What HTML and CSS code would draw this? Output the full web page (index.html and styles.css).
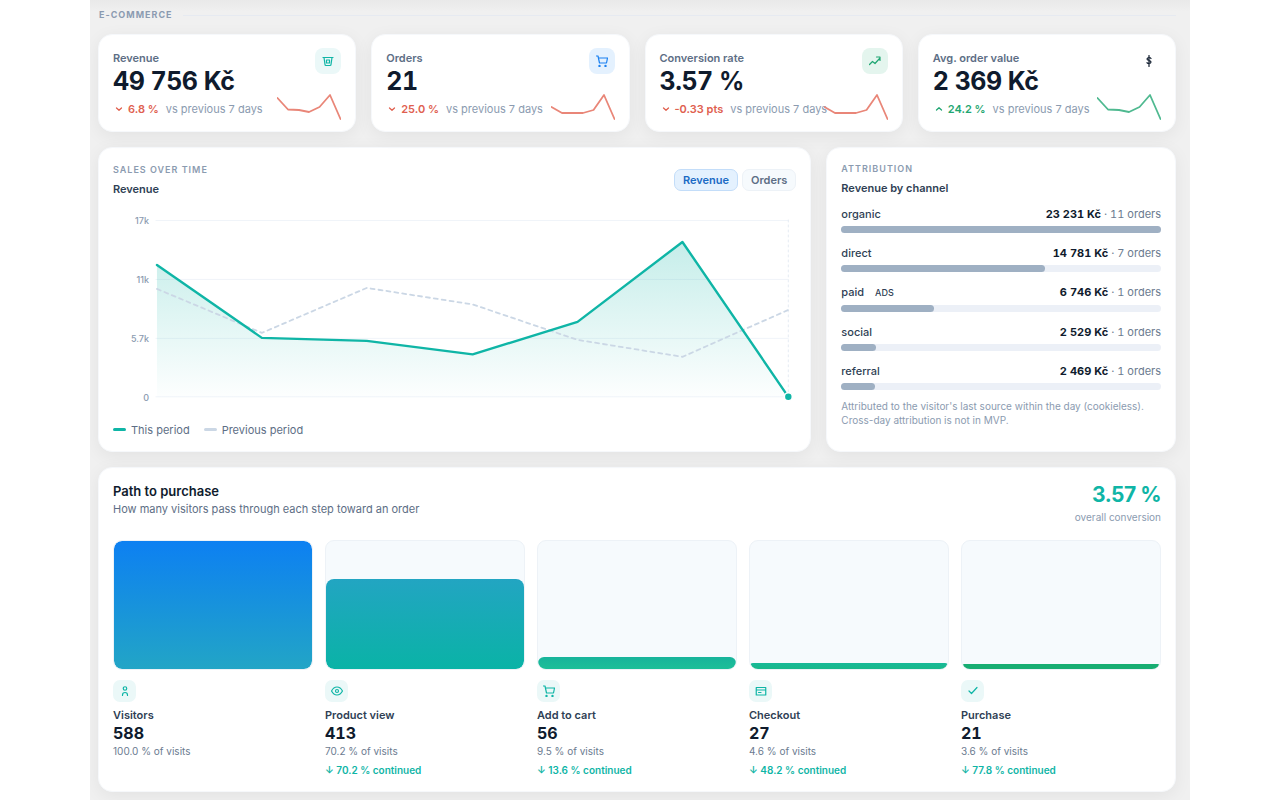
FILE: index.html
```html
<!DOCTYPE html>
<html lang="en">
<head>
    <meta charset="UTF-8">
    <meta name="viewport" content="width=device-width, initial-scale=1.0">
    <title>E-commerce overview</title>
    <link rel="stylesheet" href="styles.css">
</head>
<body>

<main class="dashboard">

    <h2 class="section-title">E-commerce</h2>

    <!-- KPI cards -->
    <section class="kpis">
        <article class="card kpi">
            <div class="kpi-text">
                <h3 class="kpi-label">Revenue</h3>
                <div class="kpi-value">49 756 Kč</div>
                <div class="kpi-delta down">
                    <svg class="caret" viewBox="0 0 12 12"><path d="M3.5 5 6 7.3 8.5 5"/></svg>
                    <strong>6.8 %</strong>
                    <span>vs previous 7 days</span>
                </div>
            </div>
            <span class="icon-box teal">
                <svg viewBox="0 0 24 24"><path d="M2 5h20M4 5l2 14q0 2 2 2h8q2 0 2-2l2-14M9 10v6M15 10v6M9 10h6M9 16h6"/></svg>
            </span>
            <svg class="spark down" viewBox="0 0 64 26"><path d="M0.5 4 11 15.5 22 16 32 18 42.5 13 53 1 63.5 25"/></svg>
        </article>

        <article class="card kpi">
            <div class="kpi-text">
                <h3 class="kpi-label">Orders</h3>
                <div class="kpi-value">21</div>
                <div class="kpi-delta down">
                    <svg class="caret" viewBox="0 0 12 12"><path d="M3.5 5 6 7.3 8.5 5"/></svg>
                    <strong>25.0 %</strong>
                    <span>vs previous 7 days</span>
                </div>
            </div>
            <span class="icon-box blue">
                <svg viewBox="0 0 24 24"><path d="M0 2h4l3 14h14l2-10H5"/><circle class="dot" cx="7" cy="22" r="1.2"/><circle class="dot" cx="19" cy="22" r="1.2"/></svg>
            </span>
            <svg class="spark down" viewBox="0 0 64 26"><path d="M0.5 13 11 19 32 19 42.5 16 53 1 63.5 25"/></svg>
        </article>

        <article class="card kpi">
            <div class="kpi-text">
                <h3 class="kpi-label">Conversion rate</h3>
                <div class="kpi-value">3.57 %</div>
                <div class="kpi-delta down">
                    <svg class="caret" viewBox="0 0 12 12"><path d="M3.5 5 6 7.3 8.5 5"/></svg>
                    <strong>-0.33 pts</strong>
                    <span>vs previous 7 days</span>
                </div>
            </div>
            <span class="icon-box green">
                <svg viewBox="0 0 24 24"><path d="M1 19l6-6 5 4 10-11M15 4h7v7"/></svg>
            </span>
            <svg class="spark down" viewBox="0 0 64 26"><path d="M0.5 13 11 19 32 19 42.5 16 53 1 63.5 25"/></svg>
        </article>

        <article class="card kpi">
            <div class="kpi-text">
                <h3 class="kpi-label">Avg. order value</h3>
                <div class="kpi-value">2 369 Kč</div>
                <div class="kpi-delta up">
                    <svg class="caret" viewBox="0 0 12 12"><path d="M3.5 7 6 4.7 8.5 7"/></svg>
                    <strong>24.2 %</strong>
                    <span>vs previous 7 days</span>
                </div>
            </div>
            <span class="icon-box">
                <svg viewBox="0 0 24 24"><path d="M14 1v22M18 7q-1-2-4-2t-4 3q0 2 4 3t4 3q0 3-4 3t-4-2"/></svg>
            </span>
            <svg class="spark up" viewBox="0 0 64 26"><path d="M0.5 4 11 15.5 22 16 32 18 42.5 13 53 1 63.5 25"/></svg>
        </article>
    </section>

    <section class="charts">
        <!-- Sales over time -->
        <article class="card sales">
            <header class="card-head">
                <div>
                    <p class="eyebrow">Sales over time</p>
                    <h3 class="card-title">Revenue</h3>
                </div>
                <div class="tabs">
                    <button type="button" class="tab active">Revenue</button>
                    <button type="button" class="tab">Orders</button>
                </div>
            </header>

            <svg class="sales-chart" viewBox="0 0 684 200">
                <defs>
                    <linearGradient id="area" x1="0" y1="0" x2="0" y2="1">
                        <stop offset="0" stop-color="#0fb5a6" stop-opacity="0.24"/>
                        <stop offset="1" stop-color="#0fb5a6" stop-opacity="0.01"/>
                    </linearGradient>
                </defs>
                <path class="grid-line" d="M43 10.5H676M43 69.5H676M43 128.5H676M43 187H676"/>
                <path class="cursor-line" d="M676 10V187"/>
                <text x="36" y="14">17k</text>
                <text x="36" y="73">11k</text>
                <text x="36" y="132">5.7k</text>
                <text x="36" y="191">0</text>
                <path fill="url(#area)" d="M44 55 149 128 254 131 360 144.5 465 112 570 32 676 187H44Z"/>
                <path class="line-previous" d="M44 79 149 123 254 78 360 94.5 465 130 570 147 676 100"/>
                <path class="line-current" d="M44 55 149 128 254 131 360 144.5 465 112 570 32 676 187"/>
                <circle class="end-point" cx="676" cy="187" r="4"/>
            </svg>

            <div class="legend">
                <span class="legend-item current">This period</span>
                <span class="legend-item previous">Previous period</span>
            </div>
        </article>

        <!-- Attribution -->
        <article class="card attribution">
            <p class="eyebrow">Attribution</p>
            <h3 class="card-title">Revenue by channel</h3>
            <ul class="channels">
                <li>
                    <div class="channel-row"><span>organic</span><span class="channel-value"><b>23 231 Kč</b> · 11 orders</span></div>
                    <div class="track"><div class="track-fill" style="width: 100%"></div></div>
                </li>
                <li>
                    <div class="channel-row"><span>direct</span><span class="channel-value"><b>14 781 Kč</b> · 7 orders</span></div>
                    <div class="track"><div class="track-fill" style="width: 63.6%"></div></div>
                </li>
                <li>
                    <div class="channel-row"><span>paid <small class="tag">ADS</small></span><span class="channel-value"><b>6 746 Kč</b> · 1 orders</span></div>
                    <div class="track"><div class="track-fill" style="width: 29%"></div></div>
                </li>
                <li>
                    <div class="channel-row"><span>social</span><span class="channel-value"><b>2 529 Kč</b> · 1 orders</span></div>
                    <div class="track"><div class="track-fill" style="width: 10.9%"></div></div>
                </li>
                <li>
                    <div class="channel-row"><span>referral</span><span class="channel-value"><b>2 469 Kč</b> · 1 orders</span></div>
                    <div class="track"><div class="track-fill" style="width: 10.6%"></div></div>
                </li>
            </ul>
            <p class="note">Attributed to the visitor's last source within the day (cookieless). Cross-day attribution is not in MVP.</p>
        </article>
    </section>

    <!-- Funnel -->
    <section class="card funnel">
        <header class="card-head">
            <div>
                <h3 class="funnel-title">Path to purchase</h3>
                <p class="funnel-sub">How many visitors pass through each step toward an order</p>
            </div>
            <div class="overall">
                <div class="overall-value">3.57 %</div>
                <div class="overall-label">overall conversion</div>
            </div>
        </header>

        <div class="steps">
            <div class="step">
                <div class="step-bar"><div class="step-fill visitors" style="height: 100%"></div></div>
                <span class="step-icon">
                    <svg viewBox="0 0 24 24"><circle cx="12" cy="7" r="3.5"/><path d="M7 21v-1q0-5 5-5t5 5v1"/></svg>
                </span>
                <h4 class="step-name">Visitors</h4>
                <div class="step-count">588</div>
                <div class="step-share">100.0 % of visits</div>
            </div>
            <div class="step">
                <div class="step-bar"><div class="step-fill views" style="height: 70.2%"></div></div>
                <span class="step-icon">
                    <svg viewBox="0 0 24 24"><path d="M1 12q4-8 11-8t11 8q-4 8-11 8T1 12z"/><circle cx="12" cy="12" r="3"/></svg>
                </span>
                <h4 class="step-name">Product view</h4>
                <div class="step-count">413</div>
                <div class="step-share">70.2 % of visits</div>
                <div class="step-next">↓ 70.2 % continued</div>
            </div>
            <div class="step">
                <div class="step-bar"><div class="step-fill cart" style="height: 9.5%"></div></div>
                <span class="step-icon">
                    <svg viewBox="0 0 24 24"><path d="M0 2h4l3 14h14l2-10H5"/><circle class="dot" cx="7" cy="22" r="1.2"/><circle class="dot" cx="19" cy="22" r="1.2"/></svg>
                </span>
                <h4 class="step-name">Add to cart</h4>
                <div class="step-count">56</div>
                <div class="step-share">9.5 % of visits</div>
                <div class="step-next">↓ 13.6 % continued</div>
            </div>
            <div class="step">
                <div class="step-bar"><div class="step-fill checkout" style="height: 4.6%"></div></div>
                <span class="step-icon">
                    <svg viewBox="0 0 24 24"><path d="M2.5 5h19v15h-19zM2.500 10h19M7 15h5"/></svg>
                </span>
                <h4 class="step-name">Checkout</h4>
                <div class="step-count">27</div>
                <div class="step-share">4.6 % of visits</div>
                <div class="step-next">↓ 48.2 % continued</div>
            </div>
            <div class="step">
                <div class="step-bar"><div class="step-fill purchase" style="height: 3.6%"></div></div>
                <span class="step-icon">
                    <svg viewBox="0 0 24 24"><path d="M4 12l5 5L20 5"/></svg>
                </span>
                <h4 class="step-name">Purchase</h4>
                <div class="step-count">21</div>
                <div class="step-share">3.6 % of visits</div>
                <div class="step-next">↓ 77.8 % continued</div>
            </div>
        </div>
    </section>

</main>

</body>
</html>
```
FILE: styles.css
```css
* {
    box-sizing: border-box;
}

body {
    margin: 0;
    background: #fff;
    color: #0f1b2d;
    font-family: Inter, "Liberation Sans", sans-serif;
    font-size: 11px;
}

h2, h3, h4, p, ul {
    margin: 0;
    padding: 0;
    font-weight: 600;
}

svg {
    display: block;
    fill: none;
    stroke: currentColor;
    stroke-width: 2;
    stroke-linecap: round;
    stroke-linejoin: round;
}

.dot {
    fill: currentColor;
}

.dashboard {
    max-width: 1100px;
    margin: 0 auto;
    padding: 9px 14px 8px 8px;
    background: linear-gradient(#e9e9e9, #f0f0f0 12px);
    overflow: hidden;
}

.section-title {
    display: flex;
    align-items: center;
    gap: 10px;
    margin: 0 0 13px 1px;
    font-size: 9px;
    font-weight: 700;
    line-height: 12px;
    letter-spacing: 1px;
    text-transform: uppercase;
    color: #8b9bb0;
}

.section-title::after {
    content: "";
    flex: 1;
    height: 1px;
    background: #e6eaf1;
}

.card {
    background: #fff;
    border: 1px solid #f6f8fb;
    border-radius: 14px;
    box-shadow: 0 4px 18px rgba(0, 0, 0, 0.06);
}

/* KPI cards */
.kpis {
    display: grid;
    grid-template-columns: repeat(4, minmax(0, 1fr));
    gap: 15px;
    margin-bottom: 15px;
}

.kpi {
    position: relative;
    display: flex;
    justify-content: space-between;
    align-items: flex-start;
    padding: 13px 14px 15px;
}

.kpi-text {
    min-width: 0;
    padding-top: 3px;
    white-space: nowrap;
}

.kpi-label {
    font-size: 11px;
    font-weight: 600;
    line-height: 14px;
    color: #5d6e85;
}

.kpi-value {
    margin: 2px 0 7px;
    font-size: 25px;
    font-weight: 700;
    line-height: 28px;
    letter-spacing: -0.5px;
    font-variant-numeric: tabular-nums;
}

.kpi-delta {
    display: flex;
    align-items: center;
    line-height: 14px;
    color: #8b9bb0;
}

.kpi-delta strong {
    margin: 0 7px 0 3px;
    font-weight: 600;
}

.kpi-delta.down strong,
.kpi-delta.down .caret {
    color: #e0604f;
}

.kpi-delta.up strong,
.kpi-delta.up .caret {
    color: #1fa672;
}

.caret {
    width: 12px;
    height: 12px;
    stroke-width: 1.3;
}

.icon-box {
    flex: none;
    display: grid;
    place-items: center;
    width: 26px;
    height: 26px;
    border-radius: 8px;
}

.icon-box svg {
    width: 12px;
    height: 12px;
    stroke-width: 2.4;
}

.icon-box.teal {
    background: #ebf8f8;
    color: #0fb5a6;
}

.icon-box.blue {
    background: #e4f1fe;
    color: #1a80f0;
}

.icon-box.green {
    background: #e4f5ee;
    color: #1fa672;
}

.spark {
    position: absolute;
    right: 14px;
    bottom: 11px;
    width: 64px;
    height: 26px;
    stroke-width: 1.8;
}

.spark.down {
    color: #e98678;
}

.spark.up {
    color: #4fb990;
}

/* Charts row */
.charts {
    display: grid;
    grid-template-columns: minmax(0, 714fr) minmax(0, 350fr);
    gap: 15px;
    margin-bottom: 15px;
}

.sales,
.attribution {
    padding: 15px 14px 13px;
}

.sales {
    padding-top: 16px;
}

.card-head {
    display: flex;
    justify-content: space-between;
    align-items: flex-start;
}

.eyebrow {
    font-size: 9px;
    line-height: 12px;
    letter-spacing: 1px;
    text-transform: uppercase;
    color: #8b9bb0;
}

.card-title {
    margin-top: 5px;
    font-size: 11px;
    line-height: 16px;
    color: #2f3f55;
}

.tabs {
    display: flex;
    gap: 4px;
    padding-top: 5px;
}

.tab {
    height: 22px;
    padding: 0 8px;
    border: 1px solid #edf2f7;
    border-radius: 7px;
    background: #f6fafd;
    color: #5d6e85;
    font: 600 11px Inter, "Liberation Sans", sans-serif;
    cursor: pointer;
}

.tab.active {
    border-color: #c3ddf9;
    background: #e4f1fe;
    color: #1b6ac4;
}

.sales-chart {
    width: 100%;
    margin-top: 13px;
}

.sales-chart text {
    fill: #8b9bb0;
    stroke: none;
    font-size: 9px;
    font-weight: 500;
    text-anchor: end;
}

.sales-chart path[fill] {
    stroke: none;
}

.grid-line {
    stroke: #f0f4f9;
    stroke-width: 1;
}

.cursor-line {
    stroke: #e6ebf3;
    stroke-width: 1;
    stroke-dasharray: 2 3;
}

.line-current {
    stroke: #0fb5a6;
    stroke-width: 2.4;
}

.line-previous {
    stroke: #cbd7e5;
    stroke-width: 1.8;
    stroke-dasharray: 4 4;
}

.end-point {
    fill: #0fb5a6;
    stroke: #fff;
    stroke-width: 1.6;
}

.legend {
    display: flex;
    gap: 14px;
    margin-top: 12px;
    line-height: 16px;
    color: #5d6e85;
}

.legend-item {
    display: flex;
    align-items: center;
    gap: 5px;
}

.legend-item::before {
    content: "";
    width: 13px;
    height: 3px;
    border-radius: 2px;
    background: #0fb5a6;
}

.legend-item.previous::before {
    background: #cbd7e5;
}

/* Attribution */
.channels {
    display: grid;
    gap: 12px;
    margin-top: 10px;
    list-style: none;
    font-weight: 400;
}

.channel-row {
    display: flex;
    justify-content: space-between;
    margin-bottom: 4px;
    line-height: 16px;
    font-weight: 500;
    color: #2f3f55;
}

.channel-value {
    font-weight: 400;
    font-variant-numeric: tabular-nums;
    color: #6b7b90;
}

.channel-value b {
    font-weight: 700;
    color: #0f1b2d;
}

.tag {
    margin-left: 8px;
    font-size: 9px;
}

.track {
    height: 7px;
    border-radius: 4px;
    background: #ecf0f7;
}

.track-fill {
    height: 100%;
    border-radius: 4px;
    background: #9fb0c3;
}

.note {
    margin-top: 9px;
    font-size: 10px;
    font-weight: 400;
    line-height: 14px;
    color: #8b9bb0;
}

/* Funnel */
.funnel {
    padding: 14px 14px 14px;
}

.funnel-title {
    font-size: 13px;
    line-height: 18px;
}

.funnel-sub {
    margin-top: 1px;
    font-weight: 400;
    line-height: 16px;
    color: #5d6e85;
}

.overall {
    text-align: right;
}

.overall-value {
    font-size: 21px;
    font-weight: 700;
    line-height: 26px;
    letter-spacing: -0.5px;
    color: #0fb5a6;
}

.overall-label {
    margin-top: 2px;
    font-size: 10px;
    line-height: 14px;
    color: #8b9bb0;
}

.steps {
    display: grid;
    grid-template-columns: repeat(5, minmax(0, 1fr));
    gap: 12px;
    margin-top: 16px;
}

.step-bar {
    display: flex;
    align-items: flex-end;
    height: 130px;
    border: 1px solid #edf2f7;
    border-radius: 9px;
    background: #f6fafd;
    overflow: hidden;
}

.step-fill {
    width: 100%;
    border-radius: 8px;
}

.visitors {
    background: linear-gradient(#0d80f2, #22a5c6);
}

.views {
    background: linear-gradient(#22a5c2, #0ab3a6);
}

.cart {
    background: linear-gradient(#17b39b, #1cbf98);
}

.checkout {
    background: linear-gradient(#17b898, #18b98a);
}

.purchase {
    background: #17ad72;
}

.step-icon {
    display: grid;
    place-items: center;
    width: 23px;
    height: 22px;
    margin: 10px 0 6px;
    border-radius: 7px;
    background: #ebf8f8;
    color: #0fb5a6;
}

.step-icon svg {
    width: 12px;
    height: 12px;
    stroke-width: 2.4;
}

.step-name {
    font-size: 11px;
    line-height: 15px;
    color: #2f3f55;
}

.step-count {
    font-size: 16px;
    font-weight: 700;
    line-height: 20px;
    font-variant-numeric: tabular-nums;
}

.step-share {
    font-size: 10px;
    line-height: 16px;
    color: #6b7b90;
}

.step-next {
    margin-top: 4px;
    font-size: 10px;
    font-weight: 600;
    line-height: 14px;
    color: #0fb5a6;
}
```
